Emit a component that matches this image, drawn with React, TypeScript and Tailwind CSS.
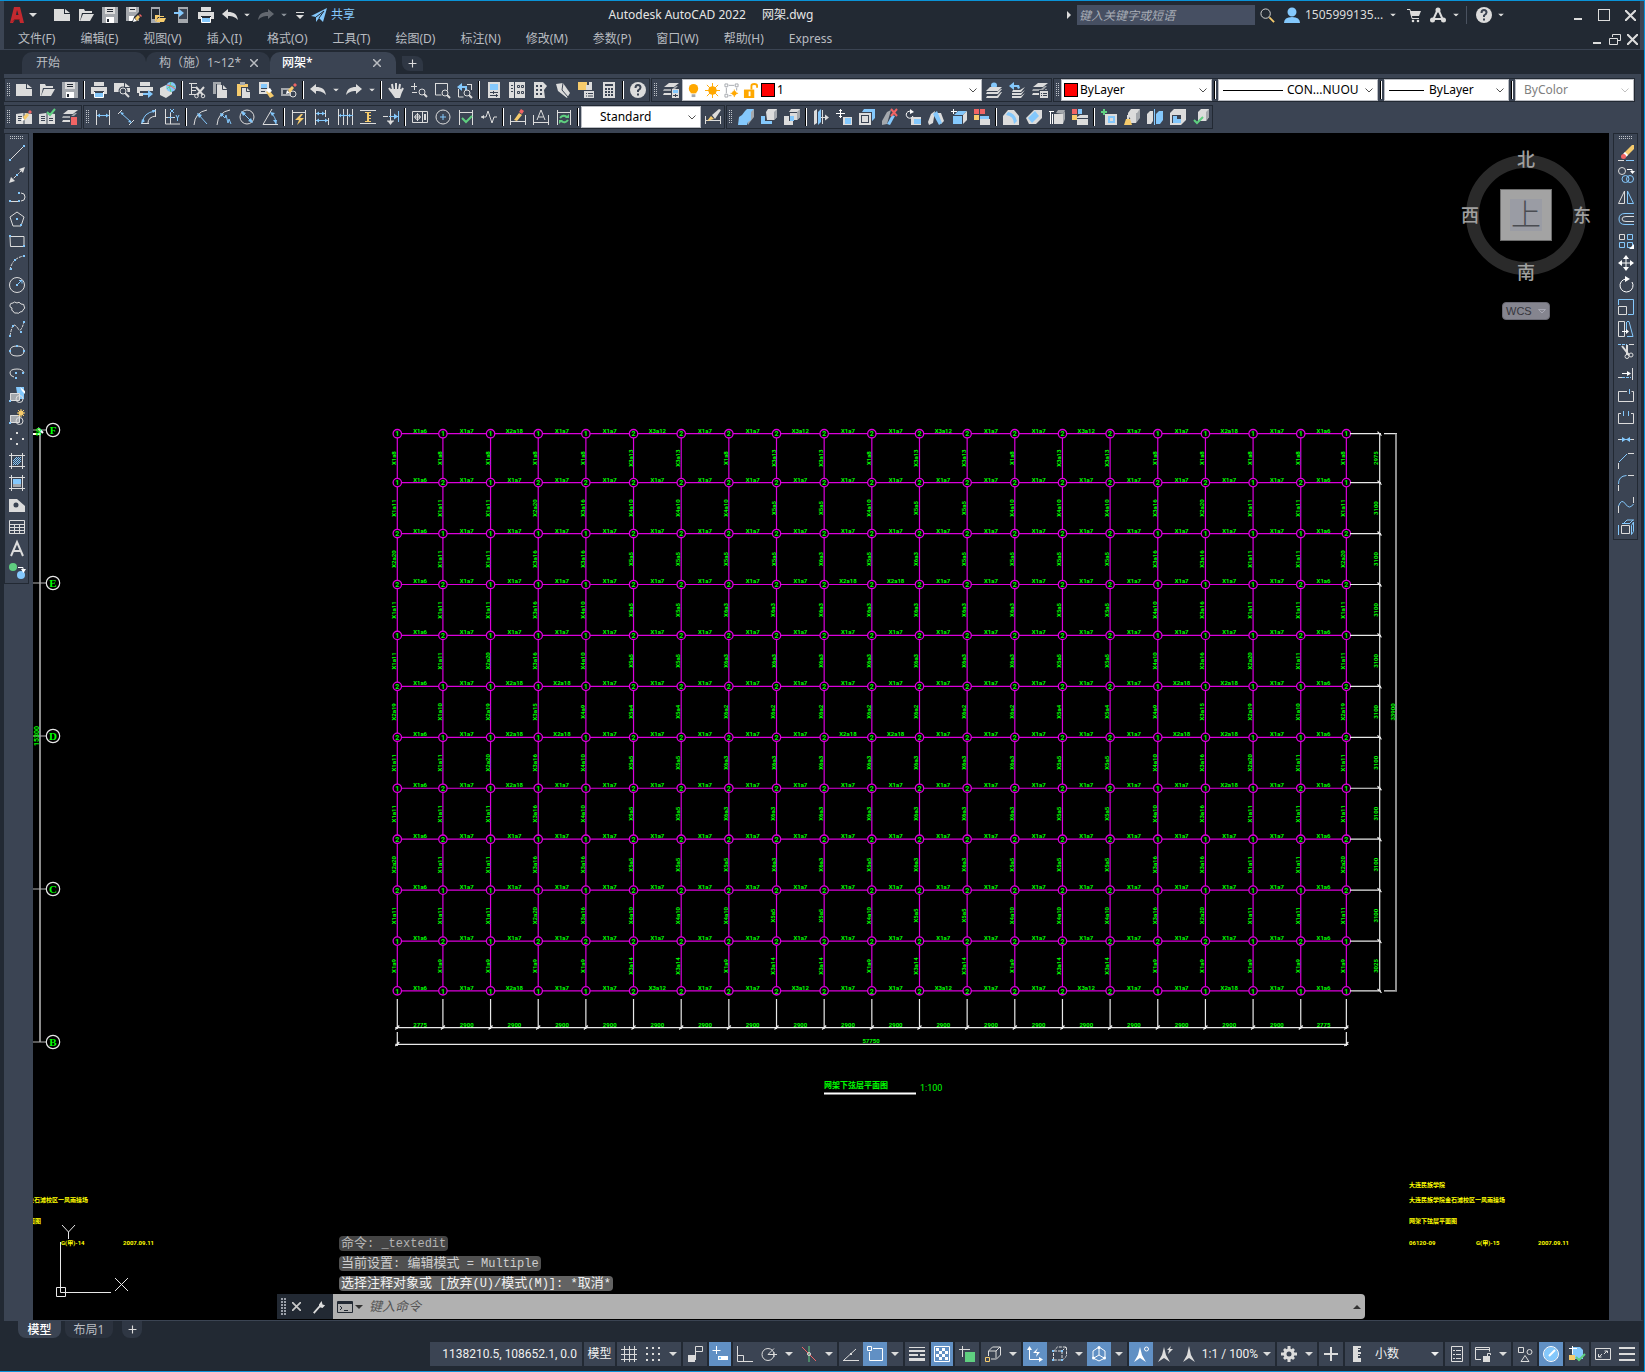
import { useState } from 'react';
import type { ReactNode } from 'react';

type Shape = [string, string];

const COLORS: Record<string, string> = {
  w: '#dcdcdc',
  W: '#ffffff',
  b: '#84c8fc',
  o: '#f6cb6c',
  a: '#ffa800',
  g: '#5fcf80',
  r: '#f06464',
  k: '#3b4453',
  d: '#a4a8ad',
  n: '#222933',
};

// circle and square as path data
const c = (x: number, y: number, r: number) => `M${x - r} ${y}a${r} ${r} 0 1 0 ${r * 2} 0a${r} ${r} 0 1 0 ${-r * 2} 0z`;
const q = (x: number, y: number) => `M${x - 1} ${y - 1}h2v2h-2z`;

const pencil: Shape[] = [['fn', 'M4 13l2-6 6-6 4 4-6 6z'], ['fW', 'M5 12l1-4 3 3z'], ['fo', 'M7 8l4-4 2 2-4 5z'], ['fr', 'M12 3l2-2 2 2-2 2z']];
const page: Shape[] = [['fw', 'M0 2h10v5h6v7H0z'], ['fw', 'M11 2v4h5z']];
const bars: Shape[] = [['sw', 'M1.500 1v15M14.500 1v15']];
const cube: Shape[] = [['fd', 'M12 4l4-4v9l-4 5z'], ['fw', 'M4 4l3-4h9l-3 4H4zM4 4h8v10H4z']];
const layers: Shape[] = [['fw', 'M6 1h10l-5 4H1z'], ['fd', 'M1 7h8l4-3h2l-5 5H0z'], ['fw', 'M1 11h8l5-4h1l-5 6H0z']];

// [mode + colour, path]: f = fill, s = hairline, t = thick line, x = dashed
const ICONS: Record<string, Shape[]> = {
  new: page,
  open: [['fw', 'M1 2h5l1 2h7v2H4l-2 8H1z'], ['fw', 'M5 7h11l-4 7H2z']],
  save: [['fd', 'M0 0h16v16H0z'], ['fw', 'M3 0h10v7H3z'], ['fn', 'M5 2h6v1H5zM5 4h6v1H5z'], ['fW', 'M4 10h8v6H4z'], ['fn', 'M5 12h2v3H5z']],
  saveAs: [['fd', 'M0 0h13v14H0z'], ['fw', 'M3 0h7v5H3z'], ['fn', 'M4 2h5v1H4z'], ['fW', 'M3 9h5v5H3z'], ['fn', 'M6 15l2-5 5-5 3 3-5 6z'], ['fW', 'M7 15l1-4 3 3z'], ['fo', 'M9 11l3-3 2 2-3 4z'], ['fr', 'M13 8l1-1 2 2-1 1z']],
  openWeb: [['fd', 'M1 0h9v16H1z'], ['fn', 'M2 2h7v10H2z'], ['fo', 'M5 8h4l1 1h4v1H8l-3 5z'], ['fo', 'M8 11h8l-2 4H6z']],
  saveWeb: [['fd', 'M4 0h10v16H4z'], ['fk', 'M5 2h8v10H5z'], ['fb', 'M0 5h5V2l5 4-5 4V7H0z']],
  print: [['fw', 'M3 0h10v4H3zM0 5h16v7h-3V9H3v3H0z'], ['fb', 'M4 11h8v4H4z'], ['sW', 'M3.500 10v5.500h9V10']],
  undo: [['fw', 'M0 7l6-5v3c6 0 9 2 10 8-3-3-5-4-10-4v3z']],
  redo: [['fw', 'M16 7l-6-5v3C4 5 1 7 0 13c3-3 5-4 10-4v3z']],
  redoDim: [['fd', 'M16 7l-6-5v3C4 5 1 7 0 13c3-3 5-4 10-4v3z']],
  share: [['fb', 'M0 9L16 1l-4 14-4-4-3 4v-5z'], ['sn', 'M5 10l8-6M8 11l5-7']],
  preview: [['fw', 'M0 1h10v5h6v4H0z'], ['fw', 'M11 1v4h5z'], ['fk', c(9, 9, 4.500)], ['sw', c(9, 9, 3)], ['tw', 'M11 11l4 4']],
  publish: [['fw', 'M3 0h10v4H3zM0 5h16v4H3v2H0z'], ['fw', 'M2 11h4v3H2z'], ['fb', 'M6 11h5V8l5 4-5 4v-3H6z']],
  globe: [['fw', 'M0 6l6-3 6 3v6l-6 4-6-3z'], ['fb', c(11, 5, 5)], ['sg', 'M7 7q3-5 8-2M11 0q-3 5 0 10'], ['sr', 'M7 3q4 0 8 4']],
  cut: [['sw', 'M0 1.500h8M2 5.500h6M2 8.500h5M0 12.500h7M2.500 2v10'], ['tw', 'M7 5l7 8M15 5l-7 8'], ['sw', c(7.5, 14, 1.8)], ['sw', c(14, 14, 1.8)]],
  copy: [['fd', 'M1 0h8v12H1z'], ['fw', 'M5 3h6l4 4v9H5z'], ['sk', 'M10.500 3v4.500H15M4.500 2v11']],
  paste: [['fo', 'M2 2h11v3H6v9H2z'], ['fd', 'M5 0h5v3H5z'], ['fw', 'M7 6h5l3 3v7H7z'], ['sk', 'M11.500 6v3.500H15']],
  matchprop: [['fw', 'M1 0h10v12H1z'], ['sk', 'M3 2.500h6M3 6.500h6M3 9.500h4'], ['fb', 'M3 2h6v4H3z'], ['fo', 'M8 10l3-2 5 6-4 2z'], ['fW', 'M8 8l4-2 2 3-3 2z']],
  blockEdit: [['fd', 'M0 6h10v8H0z'], ['fk', 'M2 8h6v4H2z'], ['sw', c(12, 12, 3)], ...pencil.slice(1)],
  pan: [['tw', 'M3 9L1 6M5 8L4 2M8 7V1M11 8l1-6M13 10l2-4'], ['fw', 'M3 7h10l1 3-2 6H7L2 9z']],
  zoomRt: [['sw', 'M0 4.500h6M3.500 1v7M1 10.500h5'], ['sw', c(11, 10, 3)], ['tw', 'M13 12l3 3']],
  zoomWin: [['sw', 'M1.500 1.500h12v7M1.500 1v12h6'], ['sw', c(11, 11, 3)], ['tw', 'M13 13l3 3']],
  zoomPrev: [['sw', 'M1.500 7v8h5M15 2.500h-5M14.500 3v5'], ['fb', 'M0 5l5-4v3h5v4H8V6H5v3z'], ['sw', c(10, 11, 3)], ['tw', 'M12 13l3 3']],
  props: [['fw', 'M2 0h12v16H2z'], ['fb', 'M4 2h8v6H4z'], ['sk', 'M4 10.500h8M4 13.500h8M7.500 9v3M10.500 12v3']],
  designCtr: [['fw', 'M0 0h5v16H0zM6 0h10v16H6z'], ['sk', 'M2 3.500h2M2 6.500h2M2 9.500h2M8.500 3.500h2v2h-2zM12.500 3.500h2v2h-2zM8.500 9.500h2v2h-2zM12.500 9.500h2v2h-2z']],
  palettes: [['fw', 'M2 0h9l4 4-3 4 1 8H2z'], ['fk', 'M4 3h2v2H4zM8 3h2v2H8zM4 7h2v2H4zM8 7h2v2H8zM4 11h2v2H4zM8 11h2v2H8z']],
  sheetSet: [['fw', 'M1 2l7-1 7 10-3 5-9-7z'], ['sk', 'M8 1l-1 7 6 7']],
  markup: [['fo', 'M0 0h9v8H0z'], ['fw', 'M8 3h3v5H8zM11 0h3v8h-3z'], ['fk', 'M5 8h11v8H5z'], ['fw', 'M6 9h10v7H6z'], ['sk', 'M8 11.500h1M10 11.500h5M8 14h1M10 14h5']],
  calc: [['fw', 'M2 0h12v16H2z'], ['fk', 'M4 2h8v2H4zM4 6h2v2H4zM7 6h2v2H7zM10 6h2v2h-2zM4 9h2v2H4zM7 9h2v2H7zM10 9h2v2h-2zM4 12h2v2H4zM7 12h2v2H7zM10 12h2v2h-2z']],
  help: [['fw', c(8, 8, 8)], ['tk', 'M5.500 6q0-3 2.500-3t2.500 2.500q0 1.500-2.500 3v1.500'], ['fk', 'M7 11.500h2v2H7z']],
  layerProps: [...layers, ['fk', 'M8 7h8v9H8z'], ['fw', 'M9 7h7v9H9z'], ['fb', 'M10 8h5v3h-5z'], ['sk', 'M10 13.500h5M12.500 12v3']],
  makeCurrent: [['fb', c(8, 3.500, 3)], ['fw', 'M4 5h12l-4 4H0z'], ['fw', 'M1 10h10l4-3h1l-4 5H0zM1 14h10l4-4h1l-4 6H0z']],
  layerPrev: [['fb', 'M0 4l5-4v3h5l1 3-2 1-1-2H5v3z'], ['fw', 'M4 8h7l5-3-4 5H3zM3 11h9l4-3-4 5H3zM3 14h9l4-3-4 5H3z']],
  layerStates: [...layers, ['fk', 'M7 8h9v8H7z'], ['fw', 'M8 9h8v7H8z'], ['sk', 'M9 11.500h1M11 11.500h4M9 13.500h1M11 13.500h4']],
  bookEdit: [['fw', 'M0 5l7-1 1 1 1-1 7 1v10H0z'], ['sk', 'M8 5v10M2 7.500h4M2 9.500h4M2 11.500h4'], ...pencil.slice(1)],
  bookCheck: [['fw', 'M0 5l7-1 1 1 1-1 7 1v10H0z'], ['sk', 'M8 5v10M2 7.500h4M2 9.500h4M2 11.500h4M10 9.500h4M10 11.500h4'], ['tg', 'M8 3l3 3 5-6']],
  layerTrans: [...layers, ['fk', 'M8 7h8v9H8z'], ['fr', 'M9 8h6v8H9z']],
  dimLinear: [...bars, ['sb', 'M2 6.500h12'], ['fb', 'M2 6.500l3-2v4zM14 6.500l-3-2v4z']],
  dimAligned: [['sw', 'M0 5l4-4M11 16l5-5'], ['sb', 'M3 4l10 9'], ['fb', 'M2 3l4 1-2 2zM14 14l-4-1 2-2z']],
  dimArc: [['sb', 'M2 13Q2 4 14 2'], ['sw', 'M7 14q0-6 8-7M0 14.500h8M14.500 0v8'], ['fb', 'M0 15l1-5 3 2zM15 1l-4 0 1 3z']],
  dimOrd: [['sw', 'M1.500 0v15H16M1 8.500h10M6.500 4v11'], ['sb', 'M6 0l4 4M10 0L6 4M12 6l1.500 3L15 6M13.500 9v3M4 8.500h5']],
  dimRadius: [['sw', 'M14 1Q2 3 1 16'], ['sb', 'M5 5l9 10'], ['fb', 'M4 4l5 2-3 3z']],
  dimJog: [['sw', 'M14 1Q2 3 1 16'], ['sb', 'M5 5l4 4 1-3 2 8 1-4 2 5'], ['fb', 'M4 4l4 1-3 3z']],
  dimDia: [['sw', c(8, 8, 7)], ['sb', 'M3 3l10 10'], ['fb', 'M2 2l5 2-3 3zM14 14l-5-2 3-3z']],
  dimAngle: [['sw', 'M10 0L1 15.500h15'], ['sb', 'M9 4q5 4 5 11'], ['fb', 'M8 3l5 1-3 3zM14 15l-3-4h4z']],
  quickDim: [...bars, ['sw', 'M2 3.500h12'], ['fo', 'M10 5L4 11h4l-2 5 7-7H9l3-4z']],
  dimBase: [['sw', 'M1.500 0v16M14.500 9v7M11.500 1v7'], ['sb', 'M2 4.500h9M2 11.500h12'], ['fb', 'M2 4.500l3-2v4zM11 4.500l-3-2v4zM2 11.500l3-2v4zM14 11.500l-3-2v4z']],
  dimCont: [['sw', 'M1.500 0v16M6.500 0v16M10.500 0v16M15.500 0v16'], ['sb', 'M2 6.500h14'], ['fb', 'M2 6.500l2-2v4zM8 6.500l-2-2v4zM14 6.500l-2-2v4z']],
  dimSpace: [['sw', 'M0 1.500h16M0 14.500h16'], ['to', 'M8 3v10'], ['so', 'M5 3.500h6M5 12.500h6M8 6.500h3M8 9.500h3']],
  dimBreak: [['sw', 'M0 7.500h5M7.500 0v15M4 12h7'], ['sb', 'M6 7.500h10M15.500 2v11'], ['fb', 'M15 7.500l-4-3v6z'], ['fw', 'M7.500 16l-3-4h6z']],
  tolerance: [['sw', 'M.5 2.500h15v11H.5zM10.500 2v12'], ['sw', c(5.500, 8, 2.5)], ['sw', 'M5.500 4v8M2 8h7'], ['tw', 'M13 5v6']],
  center: [['sw', c(8, 8, 7)], ['sb', 'M8 5v6M5 8h6']],
  inspect: [...bars, ['sw', 'M2 3.500h12'], ['tg', 'M4 9l4 4 6-6']],
  jogLine: [['sw', 'M0 8h5l2-6 4 12 2-6h3'], ['fw', 'M0 8l3-2v4z']],
  dimEdit: [['sw', 'M.5 6v10M15.500 6v10M0 12.500h16'], ['fo', 'M4 11l5-7 3 2-5 6z'], ['fr', 'M9 3l2-3 3 2-2 3z']],
  dimText: [['sw', 'M.5 6v10M15.500 6v10M0 13.500h16'], ['sw', 'M4 11l4-10 4 10M5.500 8h5']],
  dimUpdate: [...bars, ['sw', 'M2 3.500h12'], ['tg', 'M4 9q3-4 7-1M12 11q-3 4-7 1'], ['fg', 'M13 5v4H9zM3 15v-4h4z']],
  dimStyle: [['sw', 'M.5 7v8M15.500 7v8M0 11.500h16'], ['fo', 'M2 12l4-5 3 3z'], ['fw', 'M7 6l7-6 2 1-6 9z']],
  union: [['fd', 'M13 2l3-2v8l-4 5-2 3V9z'], ['fb', 'M1 8l3-2 3-4 2-2h7l-3 3v8l-3 2-1 3H0z']],
  subtract: [['fw', 'M5 3l2-3h9v8l-3 3H6z'], ['fd', 'M13 3l3-3v8l-3 3z'], ['fb', 'M0 7h4v5h7v3H0z']],
  intersect: [['fw', 'M5 3l2-3h9v8l-3 3H5zM0 7h9v9H0z'], ['fd', 'M13 3l3-3v8l-3 3z'], ['sk', 'M5.500 3v9M5 3.500h8'], ['fb', 'M6 7h4v5H6z']],
  extrude: [['fw', 'M1 2l3-2v14l-3 2z'], ['fb', 'M5 3l3-3v13l-3 3z'], ['sw', 'M8 8.500h6M9.500 1v14'], ['fw', 'M16 8.500l-4-3v6z']],
  moveFace: [['sW', 'M4.500 0v9M0 4.500h9M3 1.500h3M3 7.500h3'], ['fw', 'M7 8h9v8H7z'], ['fb', 'M9 9h6v6H9z']],
  offsetFace: [['fb', 'M3 3l2-3h11v9l-3 3V3z'], ['fw', 'M0 4h12v12H0z'], ['fk', 'M2 6h8v8H2z'], ['fw', 'M3 7h6v6H3z']],
  deleteFace: [['fd', 'M0 12l5-9 4-2-4 14-5 1z'], ['fb', 'M5 15l5-9 3 1-5 9z'], ['tr', 'M9 0l6 7M15 0L9 7']],
  rotateFace: [['sW', 'M7 3a3.500 3.500 0 1 0 1 4'], ['fW', 'M5 0l4 3-4 2z'], ['fw', 'M6 8h10v8H6z'], ['fb', 'M9 10h7v5H9z']],
  taperFace: [['fw', 'M0 13l3-8 4-3-2 12-4 2zM13 4l3 8-3 3-4-11z'], ['fb', 'M5 5l4-3 5 12-3 2z']],
  colorFace: [['fb', 'M2 7h9v8H2zM3 6l4-4h9l-4 4z'], ['fw', 'M12 6l4-4v9l-4 4z'], ['sW', 'M0 2.500h6M2.500 0v5']],
  copyFace: [['fr', 'M0 0h5v5H0zM6 0h5v5H6z'], ['fo', 'M0 6h5v5H0z'], ['fb', 'M6 7h9v3H6z'], ['fw', 'M6 10h10v6H6z']],
  shell: [['fw', 'M0 7l5-6h6l5 6v9H0z'], ['fb', 'M5 3q7 1 9 9l-3 3q0-8-8-9z']],
  imprint: [['fw', 'M0 9l8-8h8v8l-6 6H3z'], ['fb', 'M2 9l7-7 4 5-7 7z']],
  edge: [['fw', 'M5 5h9v10H5z'], ['fd', 'M7 4l2-3h7l-2 4zM14 5l2-3v8l-2 5z'], ['sW', 'M0 2.500h5M1.500 2v13M3.500 5v10']],
  edgeColor: [['fr', 'M0 0h5v5H0z'], ['fb', 'M6 0h4v5H6z'], ['fo', 'M0 6h5v5H0z'], ['fw', 'M5 8l3-2h8v3H5zM5 10h11v6H5z']],
  imprintEdge: [['tg', 'M3 0v6M0 3h6'], ['fw', 'M4 5h12v11H4z'], ['tb', 'M8 8h5v5H8z']],
  clean: [...cube, ['sk', 'M3 6l3 4'], ['fo', 'M0 16l2-6h4l2 6z'], ['fw', 'M3 6h2v4H3z']],
  separate: [['fw', 'M0 5l3-3h3v10l-2 3H0z'], ['fb', 'M9 5l3-3h4v9l-3 4H9z'], ['sb', 'M7.500 0v16']],
  shellBody: [['fw', 'M0 4l4-4h12v11l-5 5H0z'], ['fk', 'M2 6h9v8H2z'], ['fb', 'M3 7h4v3h4v4H3z']],
  check: [['fw', 'M5 3l3-3h8v8l-3 4H5z'], ['fd', 'M13 3l3-3v8l-3 4z'], ['tg', 'M1 11l3 3 6-6']],
  line: [['sw', 'M1 15L15 1'], ['fb', q(1, 15) + q(15, 1)]],
  xline: [['xw', 'M2 14L14 2'], ['fw', 'M0 16l2-6 4 4zM16 0l-2 6-4-4z'], ['fb', q(8, 8)]],
  pline: [['sw', 'M1 12.500h9M12 4q4 0 4 4t-4 4'], ['fb', q(1, 12) + q(10, 12) + q(10, 4)]],
  polygon: [['sw', 'M8 1l7 5-3 9H4L1 6z'], ['fb', q(8, 8) + q(12, 14)]],
  rect: [['sw', 'M1 3.500h14v10H1.500z'], ['fb', q(1, 3) + q(15, 13)]],
  arc: [['xw', 'M1 15Q3 3 15 1'], ['fb', q(2, 14) + q(6, 5) + q(15, 1)]],
  circle: [['sw', c(8, 8, 7.500)], ['fb', q(8, 8)], ['sb', 'M9 7l4-4M10 3.500h3v3']],
  cloud: [['sw', 'M3 9q-3-1-2-3 0-2 3-2 1-2 4 0 2-2 4 1 4 0 3 2 2 2-1 4 0 2-3 2-1 2-3 1-3 1-4-2-2 0-1-3z']],
  spline: [['xw', 'M1 15Q3 4 5 4t5 5q2 2 5-8'], ['fb', q(1, 15) + q(4, 5) + q(12, 11) + q(15, 1)]],
  ellipse: [['sw', 'M1 8q0-5 7-5t7 5-7 5-7-5z'], ['fb', q(1, 8) + q(15, 8) + q(8, 3)]],
  ellArc: [['sw', 'M5 12Q1 11 1 8q0-4 7-4 6 0 7 4'], ['fb', q(7, 8) + q(14, 8) + q(7, 13)]],
  insert: [['fb', 'M7 0h8v12H9z'], ['fW', 'M11 0l5 4v3l-3-3z'], ['fd', 'M1 6h10v7H1z'], ['sw', 'M1.500 6.500h9v7h-9z' + c(10.5, 12, 3.500)], ['fb', q(1, 14)]],
  makeBlock: [['fd', 'M1 6h10v7H1z'], ['sw', 'M1.500 6.500h9v7h-9z' + c(10.5, 12, 3.500)], ['fo', c(12, 4, 2.500)], ['so', 'M12 0v8M8 4h8M9 1l6 6M15 1L9 7'], ['fb', q(1, 14)]],
  point: [['fw', q(8, 2) + q(8, 13) + q(2, 8) + q(14, 8)]],
  hatch: [['sw', 'M0 2.500h16M0 13.500h16M2.500 0v16M13.500 0v16'], ['sb', 'M4 8l4-4M4 12l8-8M8 12l4-4M4 10l6-6M6 12l6-6']],
  gradient: [['sw', 'M0 2.500h16M0 13.500h16M2.500 0v16M13.500 0v16'], ['fb', 'M4 4h8v5H4z'], ['fd', 'M4 9h8v3H4z']],
  region: [['fw', 'M0 2h8l8 7v6H0z'], ['fk', c(7, 8, 2.500)]],
  table: [['sw', 'M.5 1.500h15v13H.5zM0 5.500h16M0 8.500h16M0 11.500h16M5.500 5v9M10.500 5v9']],
  mtext: [['tw', 'M2 15L8 1l6 14M4 10h8']],
  addSel: [['fg', c(4, 4, 4)], ['fb', c(12, 12, 4)], ['sW', 'M9 4.500h5v4'], ['fW', 'M14.500 10l-2.500-4h5z']],
  erase: [['fo', 'M6 8l8-8h2v4l-7 7z'], ['fW', 'M5 9l2-2 3 3-2 2z'], ['fr', c(5.500, 11.500, 2.500)], ['sw', 'M0 15.500h6'], ['sb', 'M8 15.500h8']],
  copyObj: [['sw', c(4, 4, 3.500)], ['sb', c(7.500, 12, 3.500) + c(12, 12, 3.500)], ['sW', 'M9 2.500h5v3'], ['fW', 'M14.500 7L12 4h5z']],
  mirror: [['sw', 'M6.500 2v12.500h-6z'], ['sb', 'M9.500 2v12.500h6z']],
  offset: [['sb', 'M16 2.500H7q-6 0-6 5.500t6 5.500h9'], ['sw', 'M16 5.500H8q-4 0-4 2.500t4 2.500h8']],
  array: [['sw', 'M1.500 1.500h5v5h-5z'], ['sb', 'M9.500 1.500h5v5h-5zM1.500 9.500h5v5h-5zM9.500 9.500h5v5h-5z'], ['fW', 'M16 11v5h-5z']],
  move: [['sW', 'M8 2v12M2 8h12'], ['fW', 'M8 0l3 4H5zM8 16l3-4H5zM0 8l4-3v6zM16 8l-4-3v6z']],
  rotate: [['sW', 'M8 2a6.500 6.500 0 1 0 6 3'], ['fW', 'M7-1l5 3-5 3z']],
  scale: [['sb', 'M.5 6V.5h15v15H10'], ['sw', 'M.5 7.500h8v8h-8z']],
  stretch: [['sw', 'M.5.5h6v15h-6z'], ['sb', 'M9 .5h2l4 15H9M8.500 1v8'], ['sW', 'M4 10.500h5'], ['fW', 'M11 10.500L8 8v5z']],
  trim: [['xb', 'M0 1.500h9'], ['sw', 'M11 1.500h5'], ['tw', 'M4 3l7 9M9 2v10'], ['sw', c(9, 13.500, 2) + c(13, 12, 2)]],
  extend: [['xb', 'M4 12.500h9'], ['sw', 'M0 12.500h4M14.500 3v12'], ['sW', 'M4 8.500h7'], ['fW', 'M13 8.500L9 6v5z']],
  breakPt: [['sw', 'M9 4.500H.5v10h15v-10h-2'], ['sb', 'M11.500 2v5']],
  breakObj: [['sw', 'M3 4.500H.5v10h15v-10H13'], ['sb', 'M5.500 2v5M10.500 2v5']],
  join: [['sw', 'M0 8.500h3M13 8.500h3'], ['sb', 'M3 8.500h10'], ['fb', 'M8 8.500L4 6v5zM8 8.500l4-2.500v5z']],
  chamfer: [['sw', 'M.5 10v6M10 .5h6'], ['sb', 'M1 9l8-8']],
  fillet: [['sw', 'M.5 10v6M10 .5h6'], ['sb', 'M.5 9q0-8 8-8.500']],
  blend: [['sw', 'M.5 9v7M15.500 0v6'], ['sb', 'M.5 9q3-8 7-2t8 0']],
  explode: [['sw', 'M3.500 6.500h8v8h-8z'], ['sb', 'M.5 6v10M4 4.500h8M6 4l3-3h7M12 4l3-3M13.500 6.500v9l2-3V3z']],
  wrench: [['tw', 'M2 15l7-8'], ['fw', 'M8 5l3-4 1 4 3 1-3 3-4-1z']],
  bulb: [['fa', c(8, 6, 5)], ['fa', 'M5 8h6v3H5z'], ['fd', 'M6 12h4v3H6z']],
  sun: [['fa', c(8, 8, 4.500)], ['sa', 'M8 0v16M0 8h16M2 2l12 12M14 2L2 14']],
  vpFreeze: [['sd', 'M2.500 5v6M5 2.500h6M13.500 5v3M5 13.500h3M1 1h3v3H1zM12 1h3v3h-3zM1 12h3v3H1z'], ['fa', c(11, 11, 2.500)], ['sa', 'M11 7v8M7 11h8']],
  unlock: [['fa', 'M1 7h11v9H1z'], ['ta', 'M9 7V3q0-2 3-2t3 2v2'], ['fW', 'M6 9h2v5H6z']],
  grid: [['sw', 'M3.500 0v16M8.500 0v16M13.500 0v16M0 3.500h16M0 8.500h16M0 13.500h16']],
  dots: [['fw', [2, 8, 14].map((x) => [2, 8, 14].map((y) => q(x, y)).join('')).join('')]],
  infer: [['fw', 'M1 9h7v7H1z'], ['sw', 'M8.500 14V.5h7v5h-7']],
  dynInput: [['sW', 'M4.500 0v8M.5 4.500h8'], ['fW', 'M6 10h10v4H6z'], ['fb', 'M7 11h2v2H7z']],
  ortho: [['sw', 'M.5 0v15.500H16M.5 9.500h6v6']],
  polar: [['sw', c(7, 8.500, 6)], ['sw', 'M7 8.500h9M7 8.500l6-6M13 6v5']],
  iso: [['sr', 'M1 1l14 14'], ['sg', 'M8 0v16'], ['sw', c(8, 8, 1.500)]],
  otrack: [['sw', 'M0 14.500h16M1 14L13 3'], ['fw', q(8, 8)]],
  osnap: [['sW', 'M6 2.500h9.500v12H2.500V6M.5.5h4v4h-4z']],
  lweight: [['sw', 'M0 1.500h16'], ['fw', 'M0 4h16v2H0zM0 8h9v2H0zM11 8h5v2h-5zM0 12h16v3H0z']],
  transp: [['sW', 'M.5.5h15v15H.5z'], ['fW', 'M2 2h3v3H2zM8 2h3v3H8zM5 5h3v3H5zM11 5h3v3h-3zM2 8h3v3H2zM8 8h3v3H8zM5 11h3v3H5zM11 11h3v3h-3z']],
  cycling: [['sw', 'M3.500 0v7M0 3.500h7M3 3.500h8M3.500 3v8'], ['fg', 'M6 6h10v10H6z']],
  osnap3d: [['sw', 'M3.500 10V5l4-4h8v8l-4 4H6M4 5h7v7M11 5l4-4'], ['so', 'M.5 11.500h4v4h-4z']],
  dynUcs: [['sW', 'M2.500 3v10.500H14'], ['fW', 'M2.500 0L0 4h5zM16 13.500L12 11v5zM11 2L6 7h4l-1 4 4-5H9z']],
  selFilter: [['xw', 'M2.500 14V5l4-4h9v9l-4 4zM3 5h8v9M11 5l4-4'], ['fb', q(2, 5) + q(11, 5) + q(2, 14) + q(11, 14)]],
  gizmo: [['sW', 'M8 1l6 4v7l-6 3-6-3V5zM8 1v8M8 9l-5 3M8 9l5 3'], ['fW', c(8, 1.500, 1.500) + c(2.500, 12, 1.500) + c(13.500, 12, 1.500)]],
  annoVis: [['fW', 'M7 1l2 8 4 7-6-4-6 4 4-7z'], ['sW', c(13.500, 3, 2)]],
  annoAuto: [['fw', 'M7 1l2 8 4 7-6-4-6 4 4-7zM14 0l-4 4h2l-1 4 5-5h-3z']],
  anno: [['fw', 'M8 0l2 9 4 7-6-4-6 4 4-7z']],
  gear: [['fw', 'M6.500 0h3v3h-3zM6.500 13h3v3h-3zM0 6.500h3v3H0zM13 6.500h3v3h-3zM2 4l2-2 2 2-2 2zM10 12l2-2 2 2-2 2zM2 12l2-2 2 2-2 2zM10 4l2-2 2 2-2 2z'], ['fw', c(8, 8, 5.500)], ['fk', c(8, 8, 2.500)]],
  plus: [['tw', 'M8 1v14M1 8h14']],
  ruler: [['fw', 'M4 0h8v2H9v1h2v1H9v2h3v2H9v1h2v1H9v2h3v4H4z']],
  quickProps: [['sw', 'M2.500.5h11v15h-11z'], ['sw', 'M4 4.500h2M7 4.500h5M4 8.500h2M7 8.500h5M4 12.500h2M7 12.500h5']],
  lockUi: [['sw', 'M6 13.500H.5V1.500h14v4M0 3.500h15'], ['fw', 'M8 10h7v6H8z'], ['sw', 'M12.500 10V7.500h3V9']],
  isolate: [['sw', 'M1.500 1.500h5v5h-5zM4 15.500l4-6 4 6z' + c(12.500, 6, 2.500)]],
  perf: [['fb', c(8, 8, 7)], ['sW', c(8, 8, 7.500)], ['tW', 'M6 10l6-6']],
  trusted: [['fb', 'M3 1h8l3 3v9H3z'], ['sW', 'M0 2.500h8M3.500 0v8'], ['fo', 'M0 9h6v5H0z'], ['tg', 'M7 11l3 3 6-6']],
  fullscreen: [['sw', 'M.5 2.500h15v11H.5zM3.500 8v3h3M12.500 7V5h-3M4 11l3-3M12 5L9 8']],
  menu: [['tw', 'M0 2h16M0 8h16M0 14h16']],
  search: [['sw', c(6, 6, 5)], ['to', 'M10 10l5 5']],
  user: [['fb', c(8, 5, 4.500)], ['fb', 'M0 16q0-6 8-6t8 6z']],
  cart: [['sw', 'M1 2.500h3l2 9h7'], ['fw', 'M4 4h11l-2 5H5z' + c(7, 14, 1.3) + c(12, 14, 1.3)]],
  appStore: [['tw', 'M8 2L3 13M8 2l5 11M3 12h10'], ['fw', c(8, 3, 2.500) + c(2.500, 13, 2.500) + c(13.500, 13, 2.500)]],
  terminal: [['sn', 'M.5 2.500h15v11H.5z'], ['tn', 'M0 4h16'], ['sn', 'M3 7l2 2-2 2M7 11.500h4']],
};

function Glyph({ name, className = 'size-4' }: { name: string; className?: string }) {
  return (
    <svg viewBox="0 0 16 16" className={`shrink-0 overflow-visible ${className}`} aria-hidden="true">
      {ICONS[name].map(([kind, d], i) => {
        const color = COLORS[kind[1]];
        if (kind[0] === 'f') return <path key={i} d={d} fill={color} />;
        return (
          <path
            key={i}
            d={d}
            fill="none"
            stroke={color}
            strokeWidth={kind[0] === 't' ? 2 : 1}
            strokeDasharray={kind[0] === 'x' ? '3 1' : undefined}
          />
        );
      })}
    </svg>
  );
}

function Caret({ className = 'text-[#dcdcdc]' }: { className?: string }) {
  return (
    <svg viewBox="0 0 8 4" className={`h-1 w-2 shrink-0 ${className}`} aria-hidden="true">
      <path d="M0 0h8L4 4z" fill="currentColor" />
    </svg>
  );
}

function Cross({ className = 'size-2' }: { className?: string }) {
  return (
    <svg viewBox="0 0 8 8" className={className} aria-hidden="true">
      <path d="M0 0l8 8M8 0L0 8" stroke="currentColor" strokeWidth="1.5" />
    </svg>
  );
}

// ---------- toolbars ----------

function Tool({ name }: { name: string }) {
  return (
    <button type="button" aria-label={name} className="flex h-5 w-[23px] shrink-0 items-center justify-center">
      <Glyph name={name} />
    </button>
  );
}

function Grip() {
  return (
    <svg viewBox="0 0 7 14" className="h-3.5 w-[7px] shrink-0" aria-hidden="true">
      <path d="M2.500 0v14M4.500 0v14" stroke="#c0c4ca" strokeDasharray="1 1" />
    </svg>
  );
}

function Sep() {
  return <div className="mx-0.5 h-[18px] w-0.5 shrink-0 border-r border-l border-r-white border-l-black" />;
}

function Toolbar({ children, className = '' }: { children: ReactNode; className?: string }) {
  return <div className={`flex h-6 items-center border border-[#222933] ${className}`}>{children}</div>;
}

// '|' puts a separator, 'v' a small drop-down arrow
function Tools({ names }: { names: string }) {
  return (
    <>
      {names.split(' ').map((name, i) => {
        if (name === '|') return <Sep key={i} />;
        if (name === 'v')
          return (
            <button key={i} type="button" aria-label="more" className="flex w-[13px] justify-center">
              <Caret className="text-[#dcdcdc] scale-75" />
            </button>
          );
        return <Tool key={i} name={name} />;
      })}
    </>
  );
}

interface ComboProps {
  label: string;
  value: string;
  className: string;
  textClass?: string;
  disabled?: boolean;
  children?: ReactNode;
}

function Combo({ label, value, className, textClass = 'pl-2', disabled, children }: ComboProps) {
  return (
    <div className={`relative flex h-[22px] shrink-0 items-center border border-[#b9bcc2] bg-white ${className}`}>
      {children}
      <select
        aria-label={label}
        disabled={disabled}
        className={`h-full min-w-0 flex-1 appearance-none bg-transparent text-xs ${disabled ? 'text-[#808080]' : 'text-black'} ${textClass}`}
      >
        <option>{value}</option>
      </select>
      <svg viewBox="0 0 8 5" className="pointer-events-none absolute right-1 h-[5px] w-2" aria-hidden="true">
        <path d="M.5.5L4 4 7.500.5" fill="none" stroke={disabled ? '#c0c0c0' : '#505050'} />
      </svg>
    </div>
  );
}

// ---------- drawing ----------

const SCALE = 60.85; // drawing units per pixel
const BAYS = [2775, ...Array(18).fill(2900), 2775];
const SPANS = [2975, ...Array(9).fill(3100), 3025];

const accumulate = (start: number, sizes: number[]) => {
  const out = [start];
  sizes.forEach((s) => out.push(out[out.length - 1] + s / SCALE));
  return out;
};
const XS = accumulate(397.3, BAYS);
const YS = accumulate(433.7, SPANS);

// right half of every row, from the middle axis outwards
const mirror = (half: string[]) => [...half.slice(1).reverse(), ...half];

const COLUMN_LABELS = [
  'X1a8 X3a13 X3a13 X1a8 X3a13 X3a13 X1a8 X1a8 X1a8 X1a8 X1a8',
  'X4a10 X5a5 X5a5 X4a10 X4a10 X4a10 X3a16 X2a20 X1a11 X1a11 X1a11',
  'X5a5 X6a3 X5a5 X5a5 X5a5 X5a5 X3a16 X3a16 X1a11 X1a11 X2a20',
  'X6a3 X6a3 X6a3 X6a3 X5a5 X5a5 X4a10 X3a16 X1a11 X1a11 X1a11',
  'X6a3 X6a3 X6a3 X6a3 X5a5 X5a5 X4a10 X3a16 X2a20 X1a11 X1a11',
  'X6a2 X6a2 X6a2 X6a2 X5a4 X5a4 X4a9 X3a15 X2a19 X1a10 X2a19',
  'X6a3 X6a3 X6a3 X6a3 X5a5 X5a5 X4a10 X3a16 X2a20 X1a11 X1a11',
  'X6a3 X6a3 X6a3 X6a3 X5a5 X5a5 X4a10 X3a16 X1a11 X1a11 X1a11',
  'X5a5 X6a3 X6a3 X5a5 X5a5 X5a5 X3a16 X3a16 X1a11 X1a11 X2a20',
  'X4a10 X5a5 X5a5 X4a10 X4a10 X4a10 X3a16 X2a20 X1a11 X1a11 X1a11',
  'X1a9 X3a14 X3a14 X1a9 X3a14 X3a14 X1a9 X1a9 X1a9 X1a9 X1a9',
].map((row) => mirror(row.split(' ')));

const NODE_TAILS = ['11111', '22121', '11112', '11122', '11121', '11112', '11112', '11121', '11122', '11112', '22121', '11111'];
const NODES = NODE_TAILS.map((tail) => mirror(('222222' + tail).split('')));

const X2_BAYS: Record<number, number[]> = {
  0: [2, 17],
  3: [9, 10],
  5: [2, 3, 16, 17],
  6: [2, 3, 9, 10, 16, 17],
  7: [2, 17],
  11: [2, 17],
};

function bayLabel(row: number, bay: number) {
  if (bay === 0 || bay === 19) return 'X1a6';
  if (X2_BAYS[row]?.includes(bay)) return 'X2a18';
  if ((row === 0 || row === 11) && [5, 8, 11, 14].includes(bay)) return 'X3a12';
  return 'X1a7';
}

const mid = (list: number[], i: number) => (list[i] + list[i + 1]) / 2;

function Side({ x, y, children }: { x: number; y: number; children: ReactNode }) {
  return (
    <text x={x} y={y} transform={`rotate(-90 ${x} ${y})`} textAnchor="middle">
      {children}
    </text>
  );
}

function Drawing() {
  const left = XS[0];
  const right = XS[20];
  const top = YS[0];
  const bottom = YS[11];
  const axes: [string, number][] = [['F', 430], ['E', 583], ['D', 736], ['C', 889], ['B', 1042]];

  return (
    <svg
      viewBox="33 133 1576 1187"
      className="absolute inset-0 size-full font-['Roboto','Noto_Sans_CJK_SC',sans-serif] font-bold"
      role="img"
      aria-label="网架下弦层平面图"
    >
      {/* Members */}
      <g stroke="#dc00dc" strokeWidth="1.2">
        {XS.map((x, i) => <line key={`x${i}`} x1={x} x2={x} y1={top} y2={bottom} />)}
        {YS.map((y, i) => <line key={`y${i}`} x1={left} x2={right} y1={y} y2={y} />)}
      </g>
      <g fill="#00ff00" fontSize="6">
        {YS.map((y, r) => BAYS.map((_, b) => (
          <text key={`${r}-${b}`} x={mid(XS, b)} y={y - 1} textAnchor="middle">{bayLabel(r, b)}</text>
        )))}
        {COLUMN_LABELS.map((row, r) => row.map((label, i) => (
          <Side key={`${r}-${i}`} x={XS[i] - 1} y={mid(YS, r)}>{label}</Side>
        )))}
      </g>

      {/* Nodes */}
      {NODES.map((row, r) => row.map((n, i) => (
        <g key={`${r}-${i}`}>
          <circle cx={XS[i]} cy={YS[r]} r="4.2" fill="#000" stroke="#dc00dc" strokeWidth="1.3" />
          <text x={XS[i]} y={YS[r] + 2.7} fontSize="7" textAnchor="middle" fill="#00ff00">{n}</text>
        </g>
      )))}

      {/* Dimensions */}
      <g stroke="#e8e8e8" strokeWidth="1.2">
        {XS.map((x, i) => (
          <path key={i} d={`M${x} 999V1029M${x - 2} 1029.500l4-4`} />
        ))}
        <path d={`M${left - 2} 1027.700H${right + 2}M${left - 2} 1044.300H${right + 2}M${left} 1032v14M${right} 1032v14M${left - 2} 1046l4-4M${right - 2} 1046l4-4`} />
        {YS.map((y, i) => (
          <path key={i} d={`M1350 ${y}H1381M1377.500 ${y - 2}l4 4`} />
        ))}
        <path d={`M1379.700 ${top}V${bottom}M1384 ${top}h13M1384 ${bottom}h13`} />
      </g>
      <path d={`M1396 ${top}V${bottom}`} stroke="#8c8c8c" strokeWidth="2" />
      <g fill="#00ff00" fontSize="6" textAnchor="middle">
        {BAYS.map((b, i) => <text key={i} x={mid(XS, i)} y="1027">{b}</text>)}
        <text x="871" y="1043">57750</text>
        {SPANS.map((s, i) => <Side key={i} x={1378} y={mid(YS, i)}>{s}</Side>)}
        <Side x={1395} y={712}>33900</Side>
      </g>
      <g fill="#00ff00">
        <text x="824" y="1088" fontSize="8">网架下弦层平面图</text>
        <text x="920" y="1091" fontSize="9" fontWeight="400">1:100</text>
      </g>
      <path d="M824 1093.500h92" stroke="#fff" strokeWidth="2" />

      {/* Axis bubbles of the neighbouring sheet */}
      <path d="M40 430V1042" stroke="#8c8c8c" strokeWidth="2" />
      {axes.map(([name, y]) => (
        <g key={name}>
          <path d={`M33 ${y}h13`} stroke="#b4b4b4" />
          <circle cx="53" cy={y} r="6.700" fill="#000" stroke="#e8e8e8" strokeWidth="1.2" />
          <text x="53" y={y + 4} fontSize="11" textAnchor="middle" fill="#00ff00" className="font-['Liberation_Serif',serif]">{name}</text>
        </g>
      ))}
      <path d="M33 434h8M38 428l5 5" stroke="#fff" strokeWidth="2" />
      <g fill="#00ff00" fontSize="7">
        <Side x={41} y={432}>50</Side>
        <Side x={39} y={736}>15300</Side>
      </g>

      {/* Title block text */}
      <g fill="#ffff00" fontSize="6">
        <text x="1409" y="1187">大连民族学院</text>
        <text x="1409" y="1202">大连民族学院金石滩校区一风雨操场</text>
        <text x="1409" y="1223">网架下弦层平面图</text>
        <text x="1409" y="1245">06120-09</text>
        <text x="1476" y="1245">G(甲)-15</text>
        <text x="1538" y="1245">2007.09.11</text>
        <text x="88" y="1202" textAnchor="end">金石滩校区一风雨操场</text>
        <text x="41" y="1223" textAnchor="end">面图</text>
        <text x="61" y="1245">G(甲)-14</text>
        <text x="123" y="1245">2007.09.11</text>
      </g>

      {/* UCS icon */}
      <path
        d="M60.500 1242v50.500H111M56.500 1287.500h9v9h-9zM115 1278l13 13M128 1278l-13 13M62 1225l6.500 7 6.500-7M68.500 1232v7"
        fill="none"
        stroke="#e8e8e8"
      />
    </svg>
  );
}

function ViewCube() {
  return (
    <>
      <svg viewBox="0 0 140 140" className="absolute top-3 right-[13px] size-[140px]" role="img" aria-label="ViewCube">
        <circle cx="70" cy="70" r="53.500" fill="none" stroke="#2a2a2a" strokeWidth="13" />
        <rect x="44.500" y="44.500" width="51" height="51" fill="#a3a3a3" stroke="#6c6c6c" />
        <rect x="54" y="54" width="32" height="32" fill="#9a9ca4" />
        <g textAnchor="middle" className="font-['Noto_Sans_CJK_SC',sans-serif]">
          <g fill="#a0a0a0" fontSize="18" className="font-medium">
            <text x="70" y="21">北</text>
            <text x="70" y="134">南</text>
            <text x="14" y="77">西</text>
            <text x="126" y="77">东</text>
          </g>
          <text x="70" y="80" fontSize="30" fill="#4a4c52" className="font-light">上</text>
        </g>
      </svg>
      <button
        type="button"
        className="absolute top-[169px] right-[59px] flex h-[18px] w-12 items-center justify-between rounded border border-[#6a6a74] bg-[#85858f] px-[3px] font-['Liberation_Sans',sans-serif] text-[11px] leading-4 text-[#35353c]"
      >
        WCS
        <svg viewBox="0 0 8 5" className="h-[5px] w-2" aria-hidden="true">
          <path d="M.5.5h7L4 4z" fill="none" stroke="#a8a8b4" />
        </svg>
      </button>
    </>
  );
}

function CommandLine() {
  const [command, setCommand] = useState('');
  const history = [
    { text: '命令: _textedit', className: 'bg-[#444444] text-[#b4b4b4]' },
    { text: '当前设置: 编辑模式 = Multiple', className: 'bg-[#505050] text-[#cfcfcf]' },
    { text: '选择注释对象或 [放弃(U)/模式(M)]: *取消*', className: 'bg-[#636363] text-[#f2f2f2]' },
  ];

  return (
    <div className="absolute inset-x-[244px] bottom-0">
      <div className="mb-[3px] ml-[62px] flex flex-col items-start gap-[5px] font-['Liberation_Mono','Noto_Sans_CJK_SC',monospace] text-xs">
        {history.map((line) => (
          <div key={line.text} className={`h-[15px] rounded-sm px-0.5 leading-[15px] whitespace-pre ${line.className}`}>
            {line.text.split(/([\u4e00-\u9fff]+)/).map((part, i) => (i % 2 ? <span key={i} className="text-[13px] leading-[15px]">{part}</span> : part))}
          </div>
        ))}
      </div>
      <div className="mb-px flex h-[25px] items-stretch">
        <div className="flex w-14 items-center gap-[5px] bg-[#222933] pl-1 text-[#c8c8c8]">
          <svg viewBox="0 0 6 18" className="h-[18px] w-1.5" aria-hidden="true">
            <path d="M1 0v18M4 0v18" stroke="#9a9fa8" strokeWidth="2" strokeDasharray="2 1" />
          </svg>
          <button type="button" aria-label="关闭"><Cross className="size-[9px]" /></button>
          <button type="button" aria-label="自定义" className="ml-1.5"><Glyph name="wrench" className="size-3.5" /></button>
        </div>
        <div className="flex flex-1 items-center gap-0.5 rounded-r-sm bg-[#b1b1b1] px-1">
          <Glyph name="terminal" />
          <Caret className="text-[#333]" />
          <input
            aria-label="键入命令"
            placeholder="键入命令"
            value={command}
            onChange={(e) => setCommand(e.target.value)}
            className="min-w-0 flex-1 bg-transparent pl-1 text-[13px] text-black italic outline-none placeholder:text-[#555]"
          />
          <Caret className="rotate-180 text-[#333]" />
        </div>
      </div>
    </div>
  );
}

// ---------- window chrome ----------

const MENUS = ['文件(F)', '编辑(E)', '视图(V)', '插入(I)', '格式(O)', '工具(T)', '绘图(D)', '标注(N)', '修改(M)', '参数(P)', '窗口(W)', '帮助(H)', 'Express'];

function QuickButton({ name }: { name: string }) {
  return (
    <button type="button" aria-label={name} className="flex w-6 shrink-0 justify-center">
      <Glyph name={name} />
    </button>
  );
}

function TitleBar() {
  return (
    <header className="border-x-4 border-b border-x-[#3b4453] border-b-[#3b4453]">
      <div className="relative flex h-7 items-center">
        <button type="button" aria-label="AutoCAD" className="ml-1.5 flex items-center gap-[5px]">
          <svg viewBox="0 0 14 16" className="h-4 w-3.5" aria-hidden="true">
            <path d="M0 16L4 0h6l4 16h-4l-1-4H5l-2 4z" fill="#c3292f" />
            <path d="M6 8l1-5 1.500 5z" fill="#222933" />
            <path d="M0 16l5-4h4l1 1H5z" fill="#8c1b20" />
          </svg>
          <Caret />
        </button>
        <div className="ml-[13px] flex items-center">
          {['new', 'open', 'save', 'saveAs', 'openWeb', 'saveWeb', 'print', 'undo'].map((n) => <QuickButton key={n} name={n} />)}
          <Caret className="mr-[3px] ml-px scale-75 text-[#dcdcdc]" />
          <span className="opacity-50"><QuickButton name="redoDim" /></span>
          <Caret className="ml-0.5 scale-75 text-[#8d939b]" />
          <svg viewBox="0 0 8 7" className="mr-[7px] ml-2 h-[7px] w-2" aria-hidden="true">
            <path d="M0 .5h8" stroke="#dcdcdc" />
            <path d="M0 3h8L4 7z" fill="#dcdcdc" />
          </svg>
          <button type="button" className="flex items-center gap-1 text-xs text-[#84c8fc]">
            <Glyph name="share" />
            共享
          </button>
        </div>
        <h1 className="pointer-events-none absolute inset-x-0 -left-[222px] flex justify-center gap-4 text-xs text-[#e6e6e6]">
          <span>Autodesk AutoCAD 2022</span>
          <span>网架.dwg</span>
        </h1>
        <div className="ml-auto flex items-center text-xs text-[#dcdcdc]">
          <Caret className="mr-1 -rotate-90 text-[#dcdcdc]" />
          <input
            aria-label="搜索"
            placeholder="键入关键字或短语"
            className="h-5 w-[178px] bg-[#464f62] px-0.5 text-xs italic outline-none placeholder:text-[#a8adb6]"
          />
          <button type="button" aria-label="search" className="ml-[5px]"><Glyph name="search" className="size-[15px]" /></button>
          <button type="button" className="ml-[9px] flex items-center gap-[5px]">
            <Glyph name="user" />
            <span className="w-[79px] text-left">1505999135...</span>
            <Caret className="scale-75" />
          </button>
          <button type="button" aria-label="cart" className="ml-[9px]"><Glyph name="cart" /></button>
          <button type="button" aria-label="apps" className="ml-2 flex items-center gap-1.5"><Glyph name="appStore" /><Caret className="scale-75" /></button>
          <div className="mr-[9px] ml-1.5 h-[18px] w-px bg-[#4a5260]" />
          <button type="button" aria-label="help" className="flex items-center gap-[5px]"><Glyph name="help" /><Caret className="scale-75" /></button>
          <button type="button" aria-label="最小化" className="ml-[69px] h-2.5 w-2 border-b-2 border-[#dcdcdc]" />
          <button type="button" aria-label="最大化" className="ml-4 size-3 border border-[#dcdcdc]" />
          <button type="button" aria-label="关闭" className="mr-1 ml-[15px]"><Cross className="size-[11px]" /></button>
        </div>
      </div>
      <div className="flex h-5 items-center text-xs text-[#b9bcc1]">
        <nav className="ml-[14px] flex gap-[25px]">
          {MENUS.map((m) => <button key={m} type="button">{m}</button>)}
        </nav>
        <div className="mr-0.5 ml-auto flex items-center text-[#dcdcdc]">
          <button type="button" aria-label="最小化" className="mr-2 h-2.5 w-2 border-b-2" />
          <button type="button" aria-label="还原" className="mr-1.5">
            <svg viewBox="0 0 12 11" className="h-[11px] w-3" aria-hidden="true">
              <path d="M3.500 3V.5h8v6H9M.5 4.500h8v6h-8z" fill="none" stroke="currentColor" />
            </svg>
          </button>
          <button type="button" aria-label="关闭"><Cross className="size-[11px]" /></button>
        </div>
      </div>
    </header>
  );
}

function FileTabs() {
  return (
    <div className="flex h-6 items-end pl-[18px] text-xs text-[#b9bcc1]">
      <button type="button" className="h-[22px] w-[124px] rounded-t-[10px] bg-[#2f3744] pl-[14px] text-left">开始</button>
      <div className="flex h-[22px] w-[124px] items-center justify-between rounded-t-[10px] bg-[#2f3744] pr-3 pl-[13px]">
        <button type="button">构（施）1~12*</button>
        <button type="button" aria-label="关闭"><Cross /></button>
      </div>
      <div className="flex h-[22px] w-[126px] items-center justify-between rounded-t-[10px] bg-[#3b4453] pr-[15px] pl-3">
        <button type="button" className="font-medium text-white">网架*</button>
        <button type="button" aria-label="关闭"><Cross /></button>
      </div>
      <button type="button" aria-label="新图形" className="mb-[3px] ml-1.5 flex h-[15px] w-[21px] items-center justify-center rounded-tr-lg rounded-bl-lg bg-[#2f3744]">
        <Glyph name="plus" className="size-[9px]" />
      </button>
    </div>
  );
}

function TopToolbars() {
  return (
    <div className="flex flex-col gap-[3px] border-r-[3px] border-r-[#222933] bg-[#3b4453] pt-1 pb-1">
      <div className="flex gap-px pr-1.5">
        <Toolbar>
          <Grip />
          <Tools names="new open save | print preview publish globe | cut copy paste matchprop blockEdit | undo v redo v | pan zoomRt zoomWin zoomPrev | props designCtr palettes sheetSet markup calc | help" />
        </Toolbar>
        <Toolbar>
          <Grip />
          <Tool name="layerProps" />
          <Combo label="图层" value="1" className="w-[300px]" textClass="pl-0.5">
            <div className="flex gap-0.5 pl-0.5">
              {['bulb', 'sun', 'vpFreeze', 'unlock'].map((n) => (
                <span key={n} className="flex w-[17px] justify-center"><Glyph name={n} className="size-[15px]" /></span>
              ))}
              <span className="size-[14px] border border-black bg-[#ff0000]" />
            </div>
          </Combo>
          <Tools names="makeCurrent layerPrev layerStates" />
        </Toolbar>
        <Toolbar className="min-w-0 flex-1">
          <Grip />
          <Combo label="颜色" value="ByLayer" className="w-[151px]" textClass="pl-0.5">
            <span className="ml-0.5 size-[14px] border border-black bg-[#ff0000]" />
          </Combo>
          <Sep />
          <Combo label="线型" value="CON...NUOU" className="w-[160px]" textClass="pl-1">
            <span className="ml-1 h-px w-[60px] bg-black" />
          </Combo>
          <Sep />
          <Combo label="线宽" value="ByLayer" className="w-[125px]" textClass="pl-[5px]">
            <span className="ml-1 h-px w-[35px] bg-black" />
          </Combo>
          <Sep />
          <Combo label="打印样式" value="ByColor" className="min-w-0 flex-1" textClass="pl-2" disabled />
        </Toolbar>
      </div>
      <div className="flex gap-px">
        <Toolbar>
          <Grip />
          <Tools names="bookEdit bookCheck layerTrans" />
        </Toolbar>
        <Toolbar>
          <Grip />
          <Tools names="dimLinear dimAligned dimArc dimOrd | dimRadius dimJog dimDia dimAngle | quickDim dimBase dimCont dimSpace dimBreak | tolerance center inspect jogLine | dimEdit dimText dimUpdate |" />
          <Combo label="标注样式" value="Standard" className="w-[120px]" textClass="pl-[18px]" />
          <Tool name="dimStyle" />
        </Toolbar>
        <Toolbar>
          <Grip />
          <Tools names="union subtract intersect | extrude moveFace offsetFace deleteFace rotateFace taperFace colorFace copyFace | shell imprint edge edgeColor | imprintEdge clean separate shellBody check" />
        </Toolbar>
      </div>
    </div>
  );
}

function SideToolbar({ names }: { names: string }) {
  return (
    <div className="flex w-[25px] flex-col items-center self-start border border-[#222933] pb-px">
      <svg viewBox="0 0 14 8" className="h-2 w-3.5" aria-hidden="true">
        <path d="M0 2.500h14M0 4.500h14" stroke="#c0c4ca" strokeDasharray="1 1" />
      </svg>
      {names.split(' ').map((n) => (
        <button key={n} type="button" aria-label={n} className="flex h-[22px] w-full items-center justify-center">
          <Glyph name={n} />
        </button>
      ))}
    </div>
  );
}

function LayoutTabs() {
  return (
    <div className="flex h-[17px] pl-[14px] text-xs leading-[17px] text-[#b9bcc1]">
      <button type="button" className="w-[43px] rounded-b-lg bg-[#3b4453] font-medium text-white">模型</button>
      <button type="button" className="ml-1 w-12 rounded-b-lg bg-[#2b323e] text-center">布局1</button>
      <button type="button" aria-label="新建布局" className="ml-[9px] flex w-5 items-center justify-center rounded-b-lg bg-[#2f3744]">
        <Glyph name="plus" className="size-[9px]" />
      </button>
    </div>
  );
}

// ---------- status bar ----------

function Group({ children }: { children: ReactNode }) {
  return <div className="flex h-6 items-stretch bg-[#3b4453]">{children}</div>;
}

function Status({ name, on, className = 'w-6' }: { name: string; on?: boolean; className?: string }) {
  return (
    <button
      type="button"
      aria-label={name}
      aria-pressed={!!on}
      className={`flex items-center justify-center ${className} ${on ? 'bg-[#6190c4]' : ''}`}
    >
      <Glyph name={name} />
    </button>
  );
}

function More() {
  return (
    <button type="button" aria-label="more" className="flex w-4 items-center justify-center">
      <Caret />
    </button>
  );
}

function StatusBar() {
  return (
    <footer className="flex h-[33px] items-start justify-end gap-0.5 pt-1 pr-[5px] text-xs whitespace-nowrap text-[#f0f0f0]">
      <Group>
        <span className="w-[152px] pr-[5px] text-right font-['Roboto','Noto_Sans_CJK_SC',sans-serif] leading-6">1138210.5, 108652.1, 0.0</span>
      </Group>
      <Group><button type="button" className="w-[31px] text-center">模型</button></Group>
      <Group><Status name="grid" /><Status name="dots" /><More /></Group>
      <Group><Status name="infer" /></Group>
      <Group><Status name="dynInput" on className="w-[22px]" /></Group>
      <Group><Status name="ortho" /><Status name="polar" /><More /><Status name="iso" /><More /></Group>
      <Group><Status name="otrack" /><Status name="osnap" on /><More /></Group>
      <Group><Status name="lweight" /></Group>
      <Group><Status name="transp" on className="w-[22px]" /></Group>
      <Group><Status name="cycling" /></Group>
      <Group><Status name="osnap3d" /><More /></Group>
      <Group><Status name="dynUcs" on /><Status name="selFilter" /><More /><Status name="gizmo" on /><More /></Group>
      <Group>
        <Status name="annoVis" on />
        <Status name="annoAuto" />
        <Status name="anno" />
        <button type="button" className="w-[58px] text-center font-['Roboto','Noto_Sans_CJK_SC',sans-serif]">1:1 / 100%</button>
        <More />
      </Group>
      <Group><Status name="gear" /><More /></Group>
      <Group><Status name="plus" /></Group>
      <Group>
        <button type="button" className="flex w-[98px] items-center pr-1 pl-1">
          <Glyph name="ruler" />
          <span className="ml-2.5">小数</span>
          <Caret className="ml-auto" />
        </button>
      </Group>
      <Group><Status name="quickProps" /></Group>
      <Group><Status name="lockUi" /><More /></Group>
      <Group><Status name="isolate" /></Group>
      <Group><Status name="perf" on /></Group>
      <Group><Status name="trusted" /></Group>
      <Group><Status name="fullscreen" /><Status name="menu" /></Group>
    </footer>
  );
}

export default function App() {
  return (
    <div className="flex min-h-screen flex-col border-t border-r border-b border-[#0a93d8] bg-[#222933] font-['Noto_Sans','Noto_Sans_CJK_SC',sans-serif]">
      <TitleBar />
      <div className="flex flex-1 flex-col pl-1">
        <FileTabs />
        <TopToolbars />
        <main className="flex flex-1 border-r-[3px] border-b border-r-[#222933] border-b-[#3b4453] bg-[#3b4453]">
          <div className="flex w-[29px] shrink-0">
            <SideToolbar names="line xline pline polygon rect arc circle cloud spline ellipse ellArc insert makeBlock point hatch gradient region table mtext addSel" />
          </div>
          <div className="relative flex-1 overflow-hidden bg-black">
            <Drawing />
            <ViewCube />
            <CommandLine />
          </div>
          <div className="flex w-8 shrink-0 pl-1">
            <SideToolbar names="erase copyObj mirror offset array move rotate scale stretch trim extend breakPt breakObj join chamfer fillet blend explode" />
          </div>
        </main>
        <LayoutTabs />
        <StatusBar />
      </div>
    </div>
  );
}
